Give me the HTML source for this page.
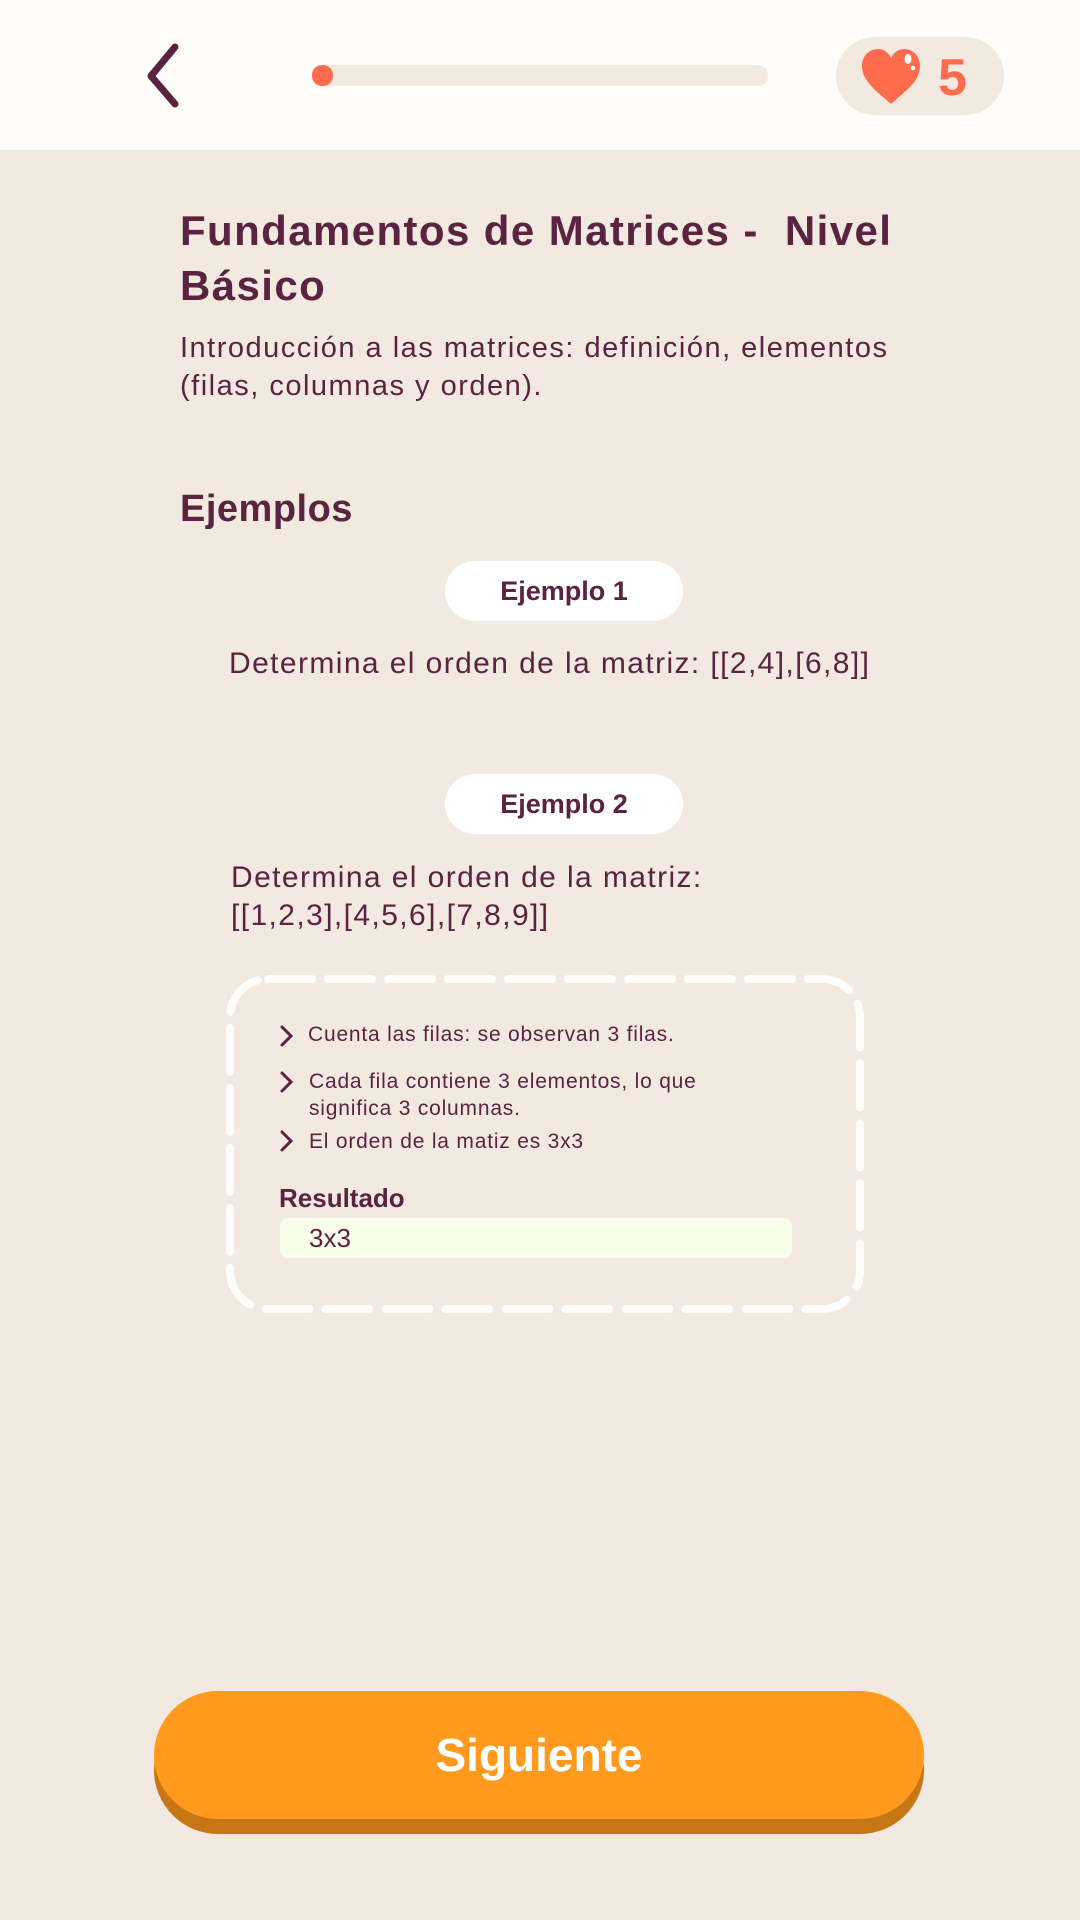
<!DOCTYPE html>
<html><head><meta charset="utf-8"><style>
*{margin:0;padding:0;box-sizing:border-box}
body{width:1080px;height:1920px;background:#f2e9e1;font-family:"Liberation Sans",sans-serif;color:#5a2340;position:relative;overflow:hidden}
.hdr{position:absolute;left:0;top:0;width:1080px;height:150px;background:#fffdfa}
.abs{position:absolute;white-space:nowrap}
.pill{position:absolute;background:#fff;border-radius:30px;text-align:center;font-weight:bold;font-size:27px;line-height:60px}
</style></head><body>
<div class="hdr"></div>
<svg class="abs" style="left:135px;top:40px" width="60" height="70"><path d="M40 7 L16 36 L40 64" fill="none" stroke="#5a2340" stroke-width="7" stroke-linecap="round" stroke-linejoin="round"/></svg>
<div class="abs" style="left:312px;top:65px;width:456px;height:21px;background:#f2e9e1;border-radius:10px"></div>
<div class="abs" style="left:312px;top:65px;width:21px;height:21px;background:#ff6b4d;border-radius:10px"></div>
<div class="abs" style="left:836px;top:37px;width:168px;height:78px;background:#f2e9e1;border-radius:39px"></div>
<svg class="abs" style="left:858px;top:46px" width="66" height="62" viewBox="0 0 66 62"><path d="M33 58 C20 46 4 36 4 20 C4 9 12 3 20 3 C27 3 31 8 33 12 C35 8 39 3 46 3 C54 3 62 9 62 20 C62 36 46 46 33 58Z" fill="#ff6b4d"/><ellipse cx="50" cy="13" rx="3.5" ry="5" fill="#fff"/><circle cx="55" cy="22" r="2.3" fill="#fff"/></svg>
<div class="abs" style="left:938px;top:50px;font-size:52px;font-weight:bold;color:#ff6b4d;line-height:56px">5</div>

<div class="abs" style="left:180px;top:203px;font-size:42px;font-weight:bold;line-height:55px;letter-spacing:1.4px">Fundamentos de Matrices -&nbsp; Nivel<br>Básico</div>
<div class="abs" style="left:180px;top:329px;font-size:29px;line-height:38px;letter-spacing:1.5px">Introducción a las matrices: definición, elementos<br>(filas, columnas y orden).</div>
<div class="abs" style="left:180px;top:486px;font-size:38px;font-weight:bold;line-height:46px;letter-spacing:0.5px">Ejemplos</div>

<div class="pill" style="left:445px;top:561px;width:238px;height:60px">Ejemplo 1</div>
<div class="abs" style="left:229px;top:645px;font-size:30px;line-height:38px;letter-spacing:1.4px">Determina el orden de la matriz: [[2,4],[6,8]]</div>
<div class="pill" style="left:445px;top:774px;width:238px;height:60px">Ejemplo 2</div>
<div class="abs" style="left:231px;top:859px;font-size:30px;line-height:38px;letter-spacing:1.4px">Determina el orden de la matriz:<br>[[1,2,3],[4,5,6],[7,8,9]]</div>

<svg class="abs" style="left:225px;top:974px" width="640" height="340"><rect x="5" y="5" width="630" height="330" rx="38" fill="none" stroke="#fffdfa" stroke-width="8" stroke-dasharray="44 16" stroke-linecap="round"/></svg>
<svg class="abs" style="left:278px;top:1024px" width="20" height="140"><g fill="none" stroke="#5a2340" stroke-width="3" stroke-linecap="round"><path d="M4 3 L13 12 L4 21"/><path d="M4 49 L13 58 L4 67"/><path d="M4 108 L13 117 L4 126"/></g></svg>
<div class="abs" style="left:308px;top:1021px;font-size:21px;line-height:27px;letter-spacing:0.8px">Cuenta las filas: se observan 3 filas.</div>
<div class="abs" style="left:309px;top:1068px;font-size:21px;line-height:27px;letter-spacing:0.8px">Cada fila contiene 3 elementos, lo que<br>significa 3 columnas.</div>
<div class="abs" style="left:309px;top:1128px;font-size:21px;line-height:27px;letter-spacing:0.8px">El orden de la matiz es 3x3</div>
<div class="abs" style="left:279px;top:1182px;font-size:26px;font-weight:bold;line-height:32px">Resultado</div>
<div class="abs" style="left:280px;top:1218px;width:512px;height:40px;background:#f7fde9;border-radius:8px"></div>
<div class="abs" style="left:309px;top:1223px;font-size:26px;line-height:30px">3x3</div>

<div class="abs" style="left:154px;top:1706px;width:770px;height:128px;background:#c77616;border-radius:64px"></div>
<div class="abs" style="left:154px;top:1691px;width:770px;height:128px;background:#ff9a1f;border-radius:64px;text-align:center;line-height:128px;color:#fff;font-size:46px;font-weight:bold">Siguiente</div>
</body></html>
